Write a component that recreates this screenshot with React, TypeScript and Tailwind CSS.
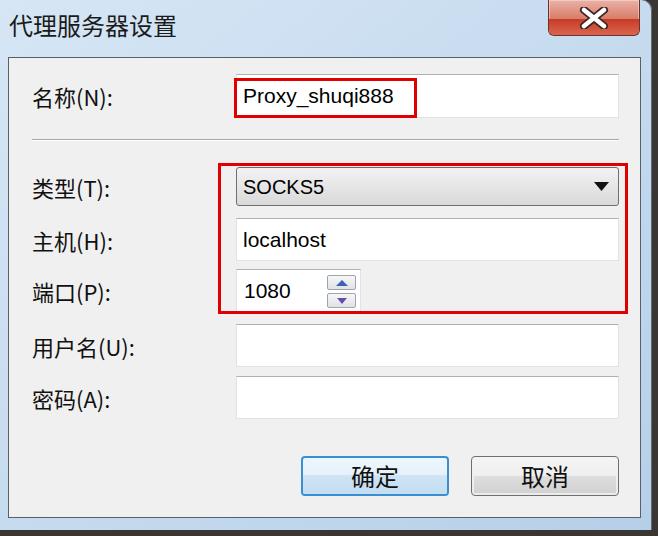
import React from "react";

const cjk = "font-['Noto_Sans_CJK_SC','Microsoft_YaHei',sans-serif]";
const latin = "font-['Liberation_Sans','Noto_Sans_CJK_SC',sans-serif]";

function Label({ text }: { text: string }) {
  return (
    <div className={`w-[204px] shrink-0 text-[22px] leading-none text-[#111] ${cjk}`}>
      {text}
    </div>
  );
}

function TextBox({ value, h = "h-[43px]" }: { value?: string; h?: string }) {
  return (
    <div
      className={`flex-1 ${h} bg-white border border-[#dfe3e8] border-t-[#aeb2b8] flex items-center pl-[6px] text-[21px] text-black ${latin}`}
    >
      {value}
    </div>
  );
}

function CloseButton() {
  return (
    <div className="relative w-[92px] h-[36px] rounded-b-[6px] border border-t-0 border-[#6b3329] overflow-hidden bg-gradient-to-b from-[#eab1a6] via-[#d9806e] to-[#c9412b] shadow-[inset_0_0_0_1px_rgba(255,255,255,0.35)] flex items-center justify-center">
      <div className="absolute left-0 right-0 bottom-0 h-[16px] bg-gradient-to-b from-[#c63a24] to-[#d9654f]" />
      <svg width="30" height="22" viewBox="0 0 30 22" className="relative">
        <path d="M5 3 L25 19 M25 3 L5 19" stroke="#3b2722" strokeWidth="8" strokeLinecap="round" fill="none" />
        <path d="M5 3 L25 19 M25 3 L5 19" stroke="#ffffff" strokeWidth="4.5" strokeLinecap="round" fill="none" />
      </svg>
    </div>
  );
}

function Spinner() {
  return (
    <div className="flex flex-col gap-[3px] self-start mt-[5px] mr-[4px]">
      <div className="w-[29px] h-[15px] border border-[#9ea4ad] rounded-[2px] bg-gradient-to-b from-[#f7f7f7] to-[#dfe2e6] flex items-center justify-center">
        <svg width="12" height="6" viewBox="0 0 12 6">
          <path d="M0 6 L6 0 L12 6 Z" fill="#3b62b8" />
        </svg>
      </div>
      <div className="w-[29px] h-[15px] border border-[#9ea4ad] rounded-[2px] bg-gradient-to-b from-[#f7f7f7] to-[#dfe2e6] flex items-center justify-center">
        <svg width="10" height="6" viewBox="0 0 10 6">
          <path d="M0 0 L10 0 L5 6 Z" fill="#6a4cab" />
        </svg>
      </div>
    </div>
  );
}

export default function App() {
  return (
    <div className="w-[658px] h-[536px] bg-[#3a3633] overflow-hidden">
      <div className="w-[652px] h-[530px] rounded-tr-[10px] bg-gradient-to-br from-[#d6e6f5] via-[#c7dbef] to-[#b6cfe8] flex flex-col pl-[8px] pr-[11px] pb-[12px] shadow-[inset_-1px_0_0_#5d6b78]">
        {/* title bar */}
        <div className="h-[57px] shrink-0 flex items-start justify-between">
          <div className={`pl-[1px] pt-[13px] text-[24px] leading-none text-[#1b1b1b] ${cjk}`}>
            代理服务器设置
          </div>
          <div className="mr-[1px]">
            <CloseButton />
          </div>
        </div>

        {/* client area */}
        <div className="flex-1 bg-[#f0f0f0] border border-[#55606b] pl-[23px] pr-[21px] pt-[16px] flex flex-col">
          <div className="flex items-center">
            <Label text="名称(N):" />
            <div className="relative flex-1 flex">
              <TextBox value="Proxy_shuqi888" h="h-[44px]" />
              <div className="absolute left-[-2px] top-[4px] w-[183px] h-[40px] border-[3px] border-[#e00000]" />
            </div>
          </div>

          <div className="mt-[21px] h-[2px] border-t border-[#a7a7a7] border-b border-b-white" />

          <div className="relative mt-[26px] flex flex-col">
            <div className="flex items-center">
              <Label text="类型(T):" />
              <div
                className={`flex-1 h-[39px] rounded-[3px] border border-[#6f6f6f] bg-gradient-to-b from-[#f3f3f3] via-[#e6e6e6] to-[#d9d9d9] flex items-center justify-between pl-[6px] pr-[9px] text-[20px] text-black ${latin}`}
              >
                <span>SOCKS5</span>
                <svg width="15" height="9" viewBox="0 0 15 9">
                  <path d="M0 0 L15 0 L7.5 9 Z" fill="#111" />
                </svg>
              </div>
            </div>

            <div className="flex items-center mt-[12px]">
              <Label text="主机(H):" />
              <TextBox value="localhost" />
            </div>

            <div className="flex items-center mt-[8px]">
              <Label text="端口(P):" />
              <div className="flex-1 flex">
                <div
                  className={`w-[125px] h-[43px] bg-white border border-[#dfe3e8] border-t-[#aeb2b8] flex items-center text-[21px] text-black ${latin}`}
                >
                  <span className="flex-1 pl-[7px]">1080</span>
                  <Spinner />
                </div>
              </div>
            </div>

            <div className="absolute left-[186px] -top-[4px] -right-[9px] -bottom-[2px] border-[3px] border-[#e00000]" />
          </div>

          <div className="flex items-center mt-[12px]">
            <Label text="用户名(U):" />
            <TextBox />
          </div>

          <div className="flex items-center mt-[9px]">
            <Label text="密码(A):" />
            <TextBox />
          </div>

          <div className="flex justify-end gap-[22px] mt-[37px]">
            <button
              className={`relative w-[148px] h-[40px] rounded-[4px] border-2 border-[#3a8fd2] overflow-hidden bg-gradient-to-b from-[#edf6fd] to-[#dcecf8] text-[24px] leading-none text-[#111] ${cjk}`}
            >
              <div className="absolute left-0 right-0 bottom-0 h-[19px] bg-gradient-to-b from-[#cfe4f4] to-[#c3ddf1]" />
              <span className="relative">确定</span>
            </button>
            <button
              className={`relative w-[148px] h-[40px] rounded-[4px] border border-[#6f6f6f] overflow-hidden bg-gradient-to-b from-[#f4f4f4] to-[#ebebeb] text-[24px] leading-none text-[#111] ${cjk}`}
            >
              <div className="absolute left-[2px] right-[2px] bottom-[2px] h-[17px] bg-gradient-to-b from-[#dedede] to-[#d2d2d2]" />
              <span className="relative">取消</span>
            </button>
          </div>
        </div>
      </div>
    </div>
  );
}
